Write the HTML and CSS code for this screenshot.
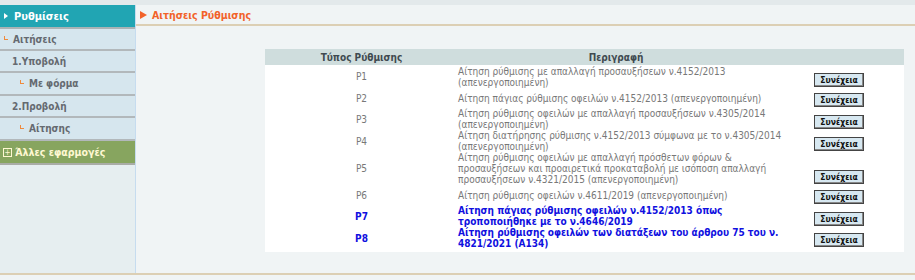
FILE: index.html
```html
<!DOCTYPE html>
<html lang="el">
<head>
    <meta charset="UTF-8">
    <title>Αιτήσεις Ρύθμισης</title>
    <link rel="stylesheet" href="styles.css">
</head>
<body>
    <div class="top-band"></div>

    <div class="page">
        <!-- αριστερό μενού -->
        <div class="sidebar">
            <div class="menu-head"><span class="arrow"></span>Ρυθμίσεις</div>
            <div class="menu-item lvl1"><span class="corner"></span>Αιτήσεις</div>
            <div class="menu-item lvl1b">1.Υποβολή</div>
            <div class="menu-item lvl2"><span class="corner"></span>Με φόρμα</div>
            <div class="menu-item lvl1b">2.Προβολή</div>
            <div class="menu-item lvl2"><span class="corner"></span>Αίτησης</div>
            <div class="menu-other"><span class="plus">+</span>Άλλες εφαρμογές</div>
        </div>

        <!-- κύριο περιεχόμενο -->
        <div class="main">
            <div class="main-title"><span class="tri"></span>Αιτήσεις Ρύθμισης</div>

            <div class="content">
                <table class="req-table">
                    <thead>
                        <tr>
                            <th class="col-type">Τύπος Ρύθμισης</th>
                            <th class="col-desc">Περιγραφή</th>
                            <th class="col-btn"></th>
                        </tr>
                    </thead>
                    <tbody>
                        <tr>
                            <td class="col-type">P1</td>
                            <td>Αίτηση ρύθμισης με απαλλαγή προσαυξήσεων ν.4152/2013 (απενεργοποιημένη)</td>
                            <td class="col-btn"><button class="btn">Συνέχεια</button></td>
                        </tr>
                        <tr>
                            <td class="col-type">P2</td>
                            <td>Αίτηση πάγιας ρύθμισης οφειλών ν.4152/2013 (απενεργοποιημένη)</td>
                            <td class="col-btn"><button class="btn">Συνέχεια</button></td>
                        </tr>
                        <tr>
                            <td class="col-type">P3</td>
                            <td>Αίτηση ρύθμισης οφειλών με απαλλαγή προσαυξήσεων ν.4305/2014 (απενεργοποιημένη)</td>
                            <td class="col-btn"><button class="btn">Συνέχεια</button></td>
                        </tr>
                        <tr>
                            <td class="col-type">P4</td>
                            <td>Αίτηση διατήρησης ρύθμισης ν.4152/2013 σύμφωνα με το ν.4305/2014 (απενεργοποιημένη)</td>
                            <td class="col-btn"><button class="btn">Συνέχεια</button></td>
                        </tr>
                        <tr>
                            <td class="col-type">P5</td>
                            <td>Αίτηση ρύθμισης οφειλών με απαλλαγή πρόσθετων φόρων &amp; προσαυξήσεων και προαιρετικά προκαταβολή με ισόποση απαλλαγή προσαυξήσεων ν.4321/2015 (απενεργοποιημένη)</td>
                            <td class="col-btn"><button class="btn">Συνέχεια</button></td>
                        </tr>
                        <tr>
                            <td class="col-type">P6</td>
                            <td>Αίτηση ρύθμισης οφειλών ν.4611/2019 (απενεργοποιημένη)</td>
                            <td class="col-btn"><button class="btn">Συνέχεια</button></td>
                        </tr>
                        <tr class="active">
                            <td class="col-type">P7</td>
                            <td>Αίτηση πάγιας ρύθμισης οφειλών ν.4152/2013 όπως τροποποιήθηκε με το ν.4646/2019</td>
                            <td class="col-btn"><button class="btn">Συνέχεια</button></td>
                        </tr>
                        <tr class="active">
                            <td class="col-type">P8</td>
                            <td>Αίτηση ρύθμισης οφειλών των διατάξεων του άρθρου 75 του ν. 4821/2021 (A134)</td>
                            <td class="col-btn"><button class="btn">Συνέχεια</button></td>
                        </tr>
                    </tbody>
                </table>
            </div>
        </div>
    </div>

    <div class="footer"></div>
</body>
</html>
```

FILE: styles.css
```css
/* βασικά */
body, html {
    margin: 0;
    padding: 0;
    background-color: #f0f4f5;
    font-family: "DejaVu Sans Condensed", "DejaVu Sans", Verdana, sans-serif;
    font-size: 10px;
}

.top-band {
    height: 5px;
    background-color: #e3e9eb;
}

.page {
    display: flex;
    height: 268px;
}

/* αριστερό μενού */
.sidebar {
    width: 135px;
    border-right: 1px solid #c6dcef;
    background-color: #e6eef0;
    flex-shrink: 0;
}

.menu-head {
    height: 22px;
    background-color: #21a5b3;
    color: #ffffff;
    font-weight: bold;
    font-size: 11px;
    border-bottom: 2px solid #a9b3b5;
    display: flex;
    align-items: center;
}

.arrow {
    width: 0;
    height: 0;
    border-top: 3px solid transparent;
    border-bottom: 3px solid transparent;
    border-left: 4px solid #ffffff;
    margin: 0 6px 0 4px;
}

.menu-item {
    height: 20px;
    background-color: #d6e6ee;
    border-bottom: 2px solid #b2b8bb;
    color: #656a70;
    font-weight: bold;
    font-size: 10px;
    display: flex;
    align-items: center;
}

.lvl1 { padding-left: 4px; }
.lvl1b { padding-left: 12px; }
.lvl2 { padding-left: 20px; height: 21px; }

.corner {
    width: 3px;
    height: 3px;
    border-left: 1px solid #f08a3c;
    border-bottom: 1px solid #f08a3c;
    margin: -3px 5px 0 0;
}

.menu-other {
    height: 22px;
    background-color: #87a55f;
    border-bottom: 2px solid #a9aca6;
    color: #fff8d2;
    font-weight: bold;
    font-size: 10.5px;
    display: flex;
    align-items: center;
    padding-left: 3px;
}

.plus {
    width: 7px;
    height: 7px;
    border: 1px solid #fff8d2;
    font-size: 8px;
    line-height: 7px;
    text-align: center;
    margin-right: 3px;
    font-weight: normal;
}

/* κύριο περιεχόμενο */
.main {
    flex: 1;
    display: flex;
    flex-direction: column;
}

.main-title {
    height: 19px;
    border-bottom: 2px solid #dccfb4;
    color: #f2622a;
    font-weight: bold;
    font-size: 10.5px;
    display: flex;
    align-items: center;
    padding-left: 4px;
}

.tri {
    width: 0;
    height: 0;
    border-top: 4px solid transparent;
    border-bottom: 4px solid transparent;
    border-left: 7px solid #f2622a;
    margin-right: 5px;
}

.content {
    display: flex;
    justify-content: flex-end;
    padding: 23px 11px 0 0;
}

.req-table {
    width: 639px;
    border-collapse: collapse;
    background-color: #ffffff;
    color: #787878;
    font-size: 10px;
    line-height: 11px;
}

.req-table th {
    background-color: #cfdddd;
    color: #404a50;
    font-weight: bold;
    height: 16px;
    padding: 0;
}

.req-table td {
    padding: 0;
    vertical-align: middle;
}

.col-type {
    width: 193px;
    text-align: center;
}

.req-table th.col-desc {
    width: 316px;
    padding-right: 14px;
}

.req-table td.col-btn {
    text-align: left;
    padding: 0 0 1px 26px;
    vertical-align: bottom;
}

.req-table tbody tr {
    height: 20px;
}

.req-table tbody tr:first-child td:nth-child(2) {
    padding-top: 1px;
}

.req-table tbody tr:last-child td {
    padding-bottom: 3px;
}

.req-table tbody tr:last-child td.col-btn {
    padding-bottom: 5px;
}

.active {
    color: #1010e0;
    font-weight: bold;
}

.btn {
    width: 50px;
    height: 14px;
    padding: 0;
    background-color: #d7e8f1;
    border: 1px solid #444444;
    box-shadow: inset -1px -1px 0 #888888;
    font-family: "DejaVu Sans Condensed", "DejaVu Sans", Verdana, sans-serif;
    font-weight: bold;
    font-size: 8.5px;
    color: #101010;
    line-height: 12px;
}

.footer {
    height: 7px;
    border-top: 2px solid #dccfb4;
    background-color: #f0f4f5;
}
```
